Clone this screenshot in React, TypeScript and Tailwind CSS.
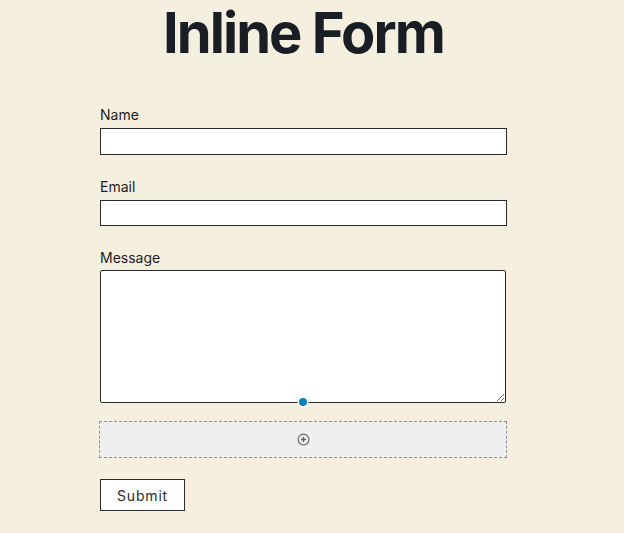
import React from "react";

export default function App() {
  return (
    <div
      className="min-h-[533px] w-[624px] bg-[#f5efdf] text-[#1e1e1e]"
      style={{ fontFamily: "Inter, 'Noto Sans', sans-serif" }}
    >
      <div className="ml-[100px] w-[407px]">
        <h1 className="pt-[5px] text-center text-[56px] font-bold leading-none tracking-[-0.035em] text-[#191e24]">
          Inline Form
        </h1>
        <form className="mt-[45px] flex flex-col">
          <label className="text-[14px] leading-[17px] text-[#1e1e1e]">Name</label>
          <input
            type="text"
            className="mt-[5px] h-[27px] w-[407px] border border-[#2b2b2b] bg-white outline-none"
          />
          <label className="mt-[23px] text-[14px] leading-[17px] text-[#1e1e1e]">Email</label>
          <input
            type="email"
            className="mt-[5px] h-[26px] w-[407px] border border-[#2b2b2b] bg-white outline-none"
          />
          <label className="mt-[23px] text-[14px] leading-[17px] text-[#1e1e1e]">Message</label>
          <div className="relative mt-[4px] w-[406px]">
            <textarea className="block h-[133px] w-[406px] rounded-[2px] border border-[#2b2b2b] bg-white outline-none" />
            <span className="absolute left-[199px] top-[128px] h-[8px] w-[8px] rounded-full bg-[#0a7fbd] ring-[1.5px] ring-white" />
          </div>
          <div className="-ml-[1px] mt-[18px] flex h-[37px] w-[408px] items-center justify-center border border-dashed border-[#8e9196] bg-[#efefef]">
            <svg width="13" height="13" viewBox="0 0 24 24" fill="none" className="ml-[1px]">
              <circle cx="12" cy="12" r="10" stroke="#5c5f63" strokeWidth="2" />
              <path d="M12 7.5v9M7.5 12h9" stroke="#5c5f63" strokeWidth="2.4" />
            </svg>
          </div>
          <div className="mt-[21px]">
            <button
              type="button"
              className="h-[32px] w-[85px] border border-[#2b2b2b] bg-white text-[14px] tracking-[0.06em] text-[#2b2b2b]"
            >
              Submit
            </button>
          </div>
        </form>
      </div>
    </div>
  );
}
